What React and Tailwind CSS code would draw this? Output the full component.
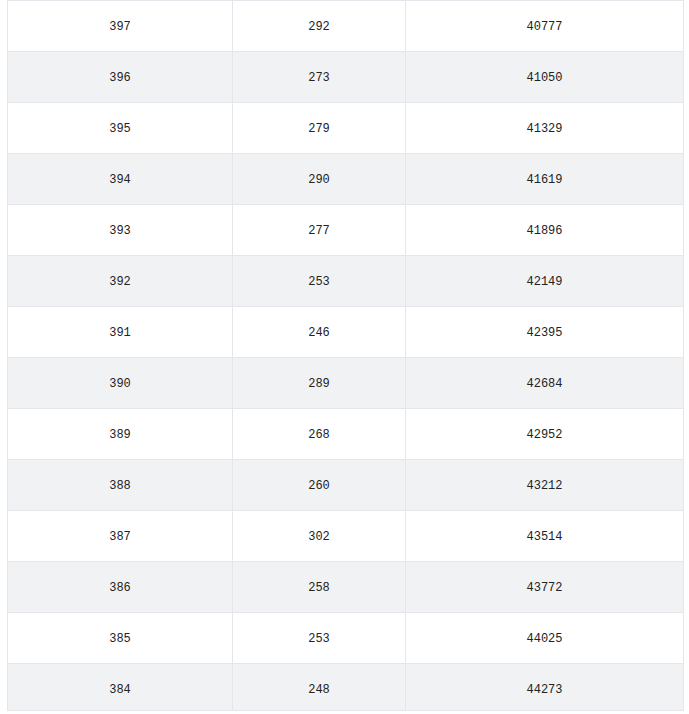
const ROWS = [
  [397, 292, 40777],
  [396, 273, 41050],
  [395, 279, 41329],
  [394, 290, 41619],
  [393, 277, 41896],
  [392, 253, 42149],
  [391, 246, 42395],
  [390, 289, 42684],
  [389, 268, 42952],
  [388, 260, 43212],
  [387, 302, 43514],
  [386, 258, 43772],
  [385, 253, 44025],
  [384, 248, 44273],
];

export default function App() {
  return (
    <div className="w-[689px] h-[714px] bg-white pl-[7px] pr-[5px] overflow-hidden">
      <div className="border-r border-b border-[#e4e6eb] font-['Liberation_Mono',monospace] text-[12px] text-[#222]">
        {ROWS.map((row, i) => {
          const last = i === ROWS.length - 1;
          return (
            <div
              key={row[0]}
              className={
                'grid grid-cols-[225px_173px_1fr] ' +
                (i % 2 === 1 ? 'bg-[#f1f2f4]' : 'bg-white')
              }
            >
              {row.map((v, j) => (
                <div
                  key={j}
                  className={
                    'border-l border-t border-[#e4e6eb] flex justify-center ' +
                    (last ? 'h-[47px] pt-[17px]' : 'h-[51px] pt-[2px] items-center')
                  }
                >
                  {v}
                </div>
              ))}
            </div>
          );
        })}
      </div>
    </div>
  );
}
